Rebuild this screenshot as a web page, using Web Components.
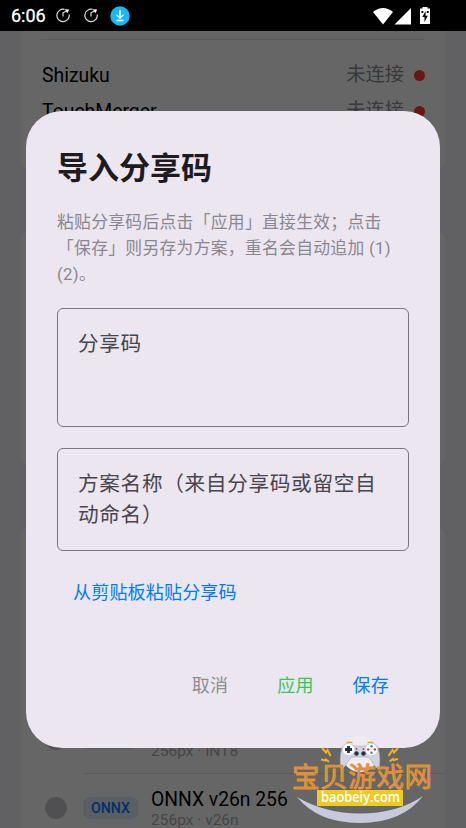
<!DOCTYPE html>
<html lang="zh-CN">
<head>
<meta charset="utf-8">
<title>导入分享码</title>
<style>
body{margin:0;width:466px;height:828px;overflow:hidden;background:#f2f2f7;font-family:Roboto,"Noto Sans CJK SC",sans-serif}
</style>
</head>
<body>
<phone-screen></phone-screen>
<script>
function define(name, html) {
  const t = document.createElement('template');
  t.innerHTML = html;
  customElements.define(name, class extends HTMLElement {
    constructor() {
      super();
      this.attachShadow({mode: 'open'}).appendChild(t.content.cloneNode(true));
    }
  });
}

define('status-bar', `<style>
:host{display:flex;align-items:center;height:31px;background:#000;color:#fff;padding:0 35px 0 11px;box-sizing:border-box}
.t{font-size:18px;font-weight:400;-webkit-text-stroke:.3px #fff;line-height:31px;width:45px}
.g{flex:1}
svg{display:block;flex:none}
</style>
<span class="t">6:06</span>
<svg width="28" height="31" viewBox="0 0 28 31" fill="none" stroke="#ddd" stroke-width="1.2"><path d="M8.500 9.400A6.200 6.200 0 1 0 13.200 14.500M7 16.500V12.800L10.500 11"/><path d="M8.800 9.300L13.200 9.600L11.300 13.200Z" fill="#fff" stroke="none"/></svg>
<svg width="26" height="31" viewBox="0 0 26 31" fill="none" stroke="#ddd" stroke-width="1.2"><path d="M8.500 9.400A6.200 6.200 0 1 0 13.200 14.500M7 16.500V12.800L10.500 11"/><path d="M8.800 9.300L13.200 9.600L11.300 13.200Z" fill="#fff" stroke="none"/></svg>
<svg width="20" height="20" viewBox="0 0 20 20"><circle cx="10" cy="10" r="9.7" fill="#14b9f5"/><path d="M10 4.3V12M6.6 8.8L10 12.2L13.4 8.8M6.5 14.5H13.5" fill="none" stroke="#fff" stroke-width="1.5"/></svg>
<span class="g"></span>
<svg width="59" height="20" viewBox="372 5 59 20" fill="#fff"><path d="M373 11Q383 3 393 11L383 23.500Z"/><path d="M411 7V23.500H394.500Z"/><path d="M420 7.500h2.500V6h5v1.500h2.500v15.500h-10Z"/><path d="M425.600 10l-3.300 6h2.200v5l3.300-6.300h-2.200Z" fill="#000"/><path d="M421.500 10h1.800v2h-1.800zM426.800 10h1.800v2h-1.800z" fill="#000"/></svg>`);

define('settings-card', `<style>
:host{display:block;background:#fff;box-sizing:border-box;border-radius:12px}
</style><slot></slot>`);

define('service-row', `<style>
:host{display:flex;align-items:center;height:36px;padding:0 20px 0 21px;font-size:19.4px;color:#000}
.s{margin-left:auto;color:#8e8e93;font-size:19.3px;line-height:30px;height:30px}
i{width:11px;height:11px;border-radius:50%;background:#ff3b30;margin-left:10px}
</style><slot></slot><span class="s">未连接</span><i></i>`);

define('model-row', `<style>
:host{display:flex;align-items:center;height:68px;padding-left:24px;box-sizing:border-box}
i{width:22px;height:22px;border-radius:50%;background:#c7c7cc;flex:none}
b{width:55px;height:22px;border-radius:7px;background:#e0eefe;color:#007aff;font-size:14.2px;line-height:23px;font-weight:500;text-align:center;margin:0 13px 0 16px;flex:none}
.n{font-size:19.3px;line-height:23px;color:#000}
.d{font-size:15.5px;line-height:18px;color:#aeaeb2}
</style><i></i><b>ONNX</b><div><div class="n"><slot name="name"></slot></div><div class="d"><slot name="detail"></slot></div></div>`);

define('settings-page', `<style>
:host{display:flex;flex-direction:column;height:797px;padding:0 21px;box-sizing:border-box;overflow:hidden}
.a{height:140px;flex:none;border-radius:0 0 12px 12px}
.b{height:237px;flex:none;margin:59px 0}
.c{height:400px;flex:none;padding-top:179px}
.l{height:1px;background:#e2e2e6}
.a .l{margin:8px 20px 17px}
.c .l{margin:0 0 0 62px}
.top{display:flow-root}
</style>
<settings-card class="a"><div class="top"><div class="l"></div></div><service-row>Shizuku</service-row><service-row>TouchMerger</service-row></settings-card>
<settings-card class="b"></settings-card>
<settings-card class="c"><model-row><span slot="name">ONNX INT8</span><span slot="detail">256px · INT8</span></model-row><div class="l"></div><model-row><span slot="name">ONNX v26n 256</span><span slot="detail">256px · v26n</span></model-row></settings-card>`);

define('outlined-field', `<style>
:host{display:block;box-sizing:border-box;border:1px solid #7a7581;border-radius:6px;padding:20px 20px;font-size:20.65px;letter-spacing:.67px;line-height:31px;color:#49454f}
</style><slot></slot>`);

define('text-button', `<style>
:host{display:block;font-size:18.05px;letter-spacing:.16px;line-height:26px;white-space:nowrap}
</style><slot></slot>`);

define('share-dialog', `<style>
:host{display:flex;flex-direction:column;box-sizing:border-box;width:414px;height:637px;border-radius:36px;background:#ebe6f0;padding:37px 31px}
h1{margin:0;font-size:31px;line-height:42px;font-weight:700;color:#1d1b20}
p{margin:19px 0 0;font-size:16.8px;letter-spacing:.3px;line-height:26px;color:#8a8790}
.f1{height:119px;margin-top:21px}
.f2{height:103px;margin-top:21px}
.paste{color:#007aff;margin:29px 0 0 16px}
.row{display:flex;justify-content:flex-end;margin-top:67px;padding-right:20px}
.no{color:#8e8e93;margin-right:49px}
.apply{color:#34c759;margin-right:39px}
.save{color:#007aff}
</style>
<h1>导入分享码</h1>
<p>粘贴分享码后点击「应用」直接生效；点击<br>「保存」则另存为方案，重名会自动追加 (1)<br>(2)。</p>
<outlined-field class="f1">分享码</outlined-field>
<outlined-field class="f2">方案名称（来自分享码或留空自动命名）</outlined-field>
<text-button class="paste">从剪贴板粘贴分享码</text-button>
<div class="row"><text-button class="no">取消</text-button><text-button class="apply">应用</text-button><text-button class="save">保存</text-button></div>`);

define('site-mark', `<style>
:host{display:block;width:150px;height:94px}
svg{display:block}
text{font-family:"Noto Sans CJK SC",sans-serif}
.url{font-family:"Open Sans","Noto Sans",sans-serif}
</style>
<svg width="150" height="94" viewBox="286 734 150 94">
<circle cx="360" cy="754" r="18" fill="#eeedef"/>
<path d="M342 748Q344 743 350 744Q355 747 360 746Q365 747 370 744Q376 743 378 748Q381 757 379 770Q374 766 371 760Q369 757 366 757H354Q351 757 349 760Q346 766 341 770Q339 757 342 748Z" fill="#d3d3e0" stroke="#a8a8ba" stroke-width=".6"/>
<path d="M346.500 742.800q3-1.500 6 0M367.500 742.800q3-1.500 6 0" fill="none" stroke="#d9a52c" stroke-width="1.300"/>
<circle cx="348.500" cy="749.500" r="5.800" fill="#fff"/><circle cx="371.500" cy="749.500" r="5.800" fill="#fff"/>
<path d="M348.500 746v7M345 749.500h7" stroke="#17364a" stroke-width="2.800"/>
<g fill="#d33e4b"><circle cx="371.500" cy="746.200" r="1.300" fill="#27a3ac"/><circle cx="371.500" cy="752.800" r="1.300" fill="#27a3ac"/><circle cx="368.200" cy="749.500" r="1.300"/><circle cx="374.800" cy="749.500" r="1.300"/><circle cx="356.500" cy="749" r="1"/><circle cx="363.500" cy="749" r="1"/></g>
<circle cx="356.500" cy="753.500" r="2.200" fill="#17364a"/><circle cx="363.500" cy="753.500" r="2.200" fill="#17364a"/>
<path d="M322 748l4 4.500 1.500-2.500 3 6M398 748l-4 4.500-1.500-2.500-4 6M321 759.500l4.500 1 .500-1 3 2.500M398 759l-4.500 1-.500-1-3.500 2.500" fill="none" stroke="#f5b01c" stroke-width="2"/>
<path d="M297 797Q325 813.500 360 813.500Q397 813.500 423 796Q402 823 360 823Q318 823 297 797Z" fill="#c8cadb"/>
<rect x="317" y="790" width="86" height="16" fill="#edcb23"/>
<text x="292" y="786.500" font-size="27.500" fill="#b69a78" stroke="#f08c1c" stroke-width=".900" textLength="140">宝贝游戏网</text>
<text class="url" x="321" y="802" font-size="13.800" font-weight="600" fill="#fff" textLength="79" lengthAdjust="spacingAndGlyphs">baobeiy.com</text>
</svg>`);

define('phone-screen', `<style>
:host{display:block;position:relative;width:466px;height:828px;overflow:hidden}
.scrim{position:absolute;inset:31px 0 0;background:rgba(0,0,0,.6)}
share-dialog{position:absolute;left:26px;top:111px}
site-mark{position:absolute;left:286px;top:734px}
</style>
<status-bar></status-bar><settings-page></settings-page><div class="scrim"></div><share-dialog></share-dialog><site-mark></site-mark>`);
</script>
</body>
</html>
